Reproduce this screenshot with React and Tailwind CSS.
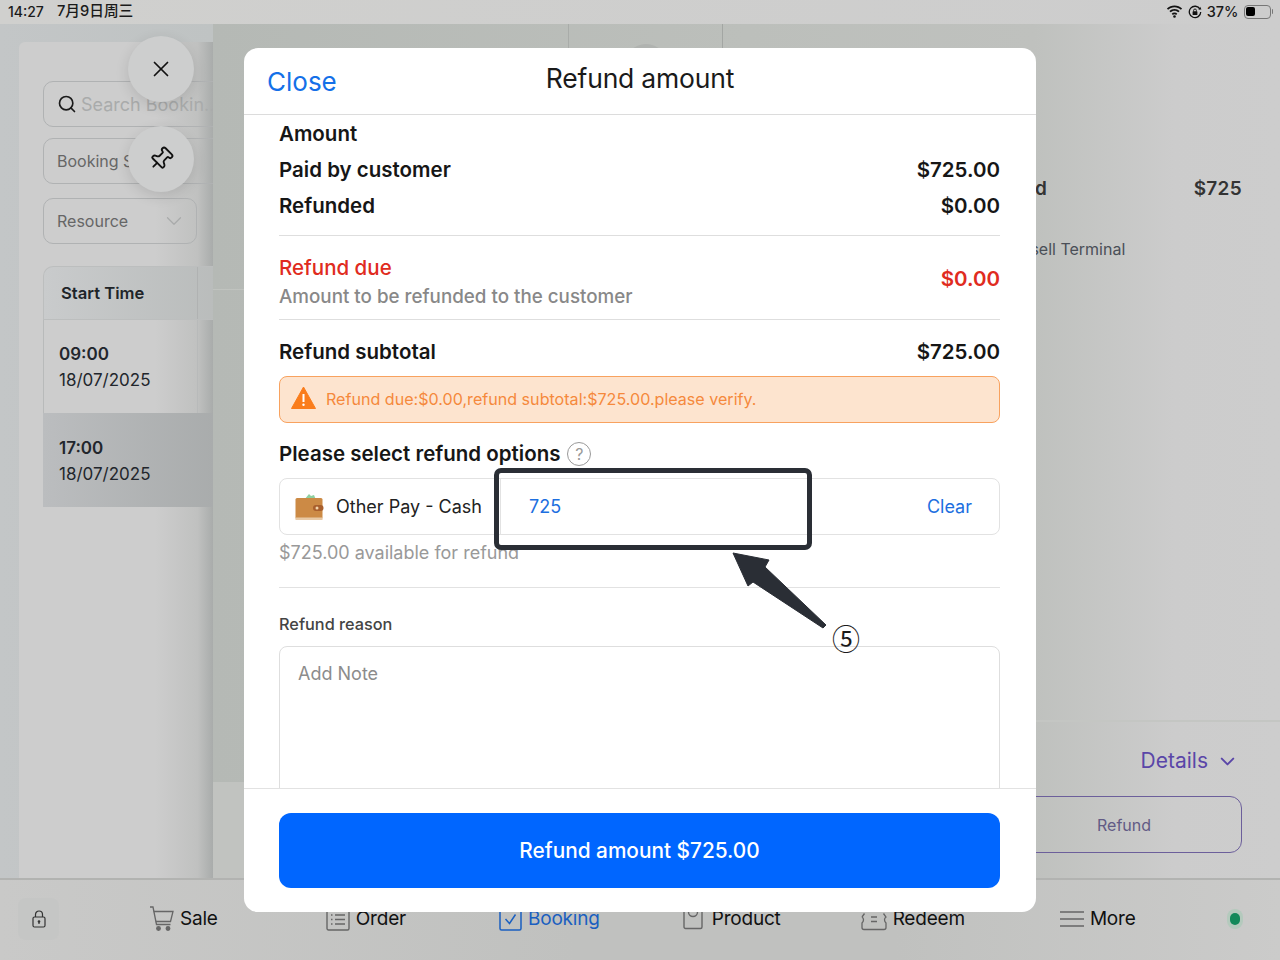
import React from "react";
import { Search, X, Pin, ChevronDown } from "lucide-react";

const Wifi = () => (
  <svg width="17" height="13" viewBox="0 0 17 13" fill="#111">
    <path d="M8.5 2.2c2.5 0 4.7 1 6.4 2.6l1.2-1.3C14.100 1.600 11.400.4 8.500.4S2.900 1.600.9 3.500l1.200 1.300C3.800 3.200 6 2.200 8.500 2.200z" />
    <path d="M8.500 5.800c1.500 0 2.800.6 3.900 1.500l1.200-1.300C12.200 4.800 10.400 4 8.500 4s-3.700.8-5.100 2l1.200 1.300c1.100-.9 2.400-1.500 3.900-1.500z" />
    <path d="M8.500 9.300c.7 0 1.200.3 1.600.7l1.200-1.300c-.7-.7-1.700-1.100-2.800-1.100s-2.100.4-2.800 1.100L6.900 10c.4-.4.900-.7 1.600-.7z" />
    <circle cx="8.500" cy="11.500" r="1.300" />
  </svg>
);

const RotLock = () => (
  <svg width="14" height="14" viewBox="0 0 14 14" fill="none">
    <path d="M12 4.200A5.700 5.700 0 1 0 12.700 7" stroke="#111" strokeWidth="1.300" />
    <path d="M10.400 4.500h3l-1.200-2.700z" fill="#111" />
    <rect x="4.600" y="6.300" width="4.800" height="3.700" rx=".6" fill="#111" />
    <path d="M5.600 6.500V5.400a1.400 1.400 0 0 1 2.800 0v1.100" stroke="#111" strokeWidth=".9" />
  </svg>
);

const Battery = () => (
  <div className="flex items-center">
    <div className="w-[27px] h-[14px] rounded-[4px] border border-[#777] p-[1.5px]">
      <div className="w-[9px] h-full rounded-[2px] bg-black" />
    </div>
    <div className="w-[1.5px] h-[5px] bg-[#777] rounded-r ml-[1px]" />
  </div>
);

const LockIcon = () => (
  <svg width="14" height="18" viewBox="0 0 14 18" fill="none" stroke="#333" strokeWidth="1.200">
    <rect x="1" y="7" width="12" height="10" rx="1.500" />
    <path d="M3.500 7V4.500a3.500 3.500 0 0 1 7 0V7" />
    <circle cx="7" cy="11.500" r="1.300" fill="#333" stroke="none" />
    <path d="M7 12v2" />
  </svg>
);

const CartIcon = () => (
  <svg width="25" height="26" viewBox="0 0 25 26" fill="none" stroke="#666" strokeWidth="1.300">
    <path d="M1 1h3l3.500 17.500h14" />
    <path d="M4.700 5.500H24l-2.500 10H6.700" />
    <circle cx="9.500" cy="22.500" r="1.800" fill="#666" />
    <circle cx="19" cy="22.500" r="1.800" fill="#666" />
  </svg>
);

const OrderIcon = () => (
  <svg width="24" height="24" viewBox="0 0 24 24" fill="none" stroke="#666" strokeWidth="1.400">
    <rect x="1" y="2" width="22" height="21" rx="1.500" />
    <path d="M9 8h10M9 12.500h10M9 17h10" />
    <path d="M5 8h1.500M5 12.500h1.500M5 17h1.500" />
  </svg>
);

const BookingIcon = () => (
  <svg width="23" height="24" viewBox="0 0 23 24" fill="none" stroke="#1a5fc0" strokeWidth="1.500">
    <rect x="1" y="2" width="21" height="21" rx="1.500" />
    <path d="M6.500 12l4 4.500 6-9" />
  </svg>
);

const ProductIcon = () => (
  <svg width="20" height="22" viewBox="0 0 20 22" fill="none" stroke="#666" strokeWidth="1.400">
    <rect x="1" y="1.500" width="18" height="19" rx="1.500" />
    <path d="M5.500 4a4.500 4.500 0 0 0 9 0" />
  </svg>
);

const RedeemIcon = () => (
  <svg width="26" height="24" viewBox="0 0 26 24" fill="none" stroke="#666" strokeWidth="1.300">
    <path d="M3 2h20M1 10c2 1.500 2 4 0 6v4.500A2 2 0 0 0 3 22.500h20a2 2 0 0 0 2-2V16c-2-2-2-4.500 0-6l-2.500-3.500M1 10l2.500-3.500" />
    <path d="M10 10h6M10 14.500h6" />
  </svg>
);

const MoreIcon = () => (
  <svg width="24" height="18" viewBox="0 0 24 18" fill="none" stroke="#666" strokeWidth="1.600">
    <path d="M0 2h24M0 9h24M0 16h24" />
  </svg>
);

const WalletIcon = () => (
  <svg width="29" height="28" viewBox="0 0 29 28" fill="none">
    <path d="M9 7l5-6 2 2 3-1 2 5z" fill="#8fd0a0" />
    <rect x="0.500" y="5" width="27" height="21" rx="1.500" fill="#cc8a45" />
    <rect x="0.500" y="24.500" width="27" height="2.500" fill="#e8c9a5" />
    <rect x="18" y="12" width="10.500" height="6" rx="3" fill="#a85f2d" />
    <circle cx="22" cy="15" r="1.500" fill="#f3d3a9" />
  </svg>
);

const WarnIcon = () => (
  <svg width="25" height="23" viewBox="0 0 25 23" className="-mt-[4px]">
    <path d="M12.500 1L24.500 22.500H.5z" fill="#fa7d1c" stroke="#fa7d1c" strokeLinejoin="round" />
    <rect x="11.500" y="8" width="2" height="8" fill="#fff" />
    <circle cx="12.500" cy="18.800" r="1.200" fill="#fff" />
  </svg>
);

const Row = ({ label, value }) => (
  <div className="h-9 shrink-0 flex items-center justify-between text-[20.5px] font-semibold text-[#161616]">
    <span>{label}</span>
    <span>{value}</span>
  </div>
);

const NavItem = ({ icon, label, className, text }) => (
  <div className={`flex items-center gap-[6px] ${className}`}>
    {icon}
    <span className={`text-[19px] tracking-[-0.2px] ${text}`}>{label}</span>
  </div>
);

export default function App() {
  return (
    <div className="relative w-[1280px] h-[960px] overflow-hidden flex flex-col bg-[#cbcbcb] font-[Inter,'Noto_Sans_CJK_SC',sans-serif]">
      {/* status bar */}
      <div className="h-6 shrink-0 flex items-center justify-between pl-2 pr-[7px] pb-[1px] bg-linear-to-r from-[#d0d0ce] to-[#cdcdcd] text-[14px] font-medium text-[#1a1a1a]">
        <div className="flex gap-[13px] items-center">
          <span>14:27</span>
          <span className="text-[14.7px]">7月9日周三</span>
        </div>
        <div className="flex items-center gap-[5px]">
          <Wifi />
          <RotLock />
          <span className="text-[14.5px]">37%</span>
          <Battery />
        </div>
      </div>

      {/* main */}
      <div className="h-[854px] shrink-0 flex">
        {/* left panel */}
        <div className="w-[213px] shrink-0 pt-[18px] pl-[19px] bg-linear-to-r from-[#c3c6c7] to-[#bfc3c3] overflow-hidden">
          <div className="h-full rounded-tl-[6px] pt-[39px] pl-6 bg-[linear-gradient(90deg,#cdcdcd_0%,#cdcdcd_70%,#c0c1c0_92%,#a9acab_100%)]">
            <div className="w-[200px] h-[46px] border border-[#b0b2b3] rounded-[10px] flex items-center pl-[13px] gap-[4px] text-[#a9abab] text-[18px] whitespace-nowrap">
              <Search size={20} color="#1a1a1a" strokeWidth={2} className="shrink-0" />
              <span>Search Bookin..</span>
            </div>
            <div className="mt-[11px] w-[200px] h-[46px] border border-[#b0b2b3] rounded-[10px] flex items-center pl-[13px] text-[#666] text-[16px] whitespace-nowrap">
              Booking Status
            </div>
            <div className="mt-[14px] w-[154px] h-[46px] border border-[#b0b2b3] rounded-[10px] flex items-center justify-between pl-[13px] pr-[9px] text-[#666] text-[16px]">
              <span>Resource</span>
              <ChevronDown size={26} color="#a8aaaa" strokeWidth={1.100} />
            </div>
            <div className="mt-[22px] w-[200px]">
              <div className="h-[54px] flex items-center pl-[17px] rounded-tl-[10px] border-t border-l border-b border-[#bcbebe] bg-linear-to-r from-[#c9cbcc] to-[#b7bab9] text-[16.6px] font-semibold text-[#202428]">
                <span className="w-[136px]">Start Time</span>
                <span className="h-full border-l border-[#b0b2b2]" />
              </div>
              <div className="h-[93px] flex">
                <div className="w-[155px] h-full pl-[15px] pt-[24px] border-l border-r border-[#b8baba] text-[#22262c]">
                  <div className="text-[17px] font-semibold leading-[21px]">09:00</div>
                  <div className="text-[17px] mt-[5px] leading-[21px]">18/07/2025</div>
                </div>
              </div>
              <div className="h-[94px] pl-[16px] pt-[25px] bg-linear-to-r from-[#bbbdbf] to-[#a6a9a9] text-[#22262c]">
                <div className="text-[17px] font-semibold leading-[21px]">17:00</div>
                <div className="text-[17px] mt-[5px] leading-[21px]">18/07/2025</div>
              </div>
            </div>
          </div>
        </div>

        {/* right page, behind the modal */}
        <div className="flex-1 flex flex-col bg-[linear-gradient(90deg,#b5b9b5_0%,#bcbfbb_50%,#bfc1be_77%,#cccccc_90%,#cdcdcd_100%)]">
          <div className="h-[696px] shrink-0 flex">
            <div className="w-[356px] h-[266px] border-r border-[#a9aca9] border-b border-b-[#c0c3bf]" />
            <div className="w-[154px] h-[24px] border-r border-[#a3a6a3] flex justify-center">
              <div className="w-[44px] h-[44px] mt-[20px] rounded-full bg-[#b0b3b0]" />
            </div>
            <div className="flex-1 pl-[284px] pr-[38px] pt-[151px]">
              <div className="flex justify-between items-center text-[19px] font-semibold text-[#333]">
                <span>Paid</span>
                <span className="tracking-[0.3px]">$725</span>
              </div>
              <div className="mt-[33px] ml-[4px] text-[16px] text-[#4a4f57] whitespace-nowrap">Resell Terminal</div>
            </div>
          </div>
          <div className="flex-1 flex">
            <div className="w-[31px] mt-[62px] bg-[#c1c3c0]" />
            <div className="flex-1 ml-[300px] border-t-2 border-[#c4c6c3] flex flex-col items-end pr-[38px]">
              <div className="mt-[26px] h-[26px] flex items-center gap-[8px] pr-[3px] text-[21px] text-[#5a46a8]">
                <span>Details</span>
                <ChevronDown size={23} color="#5a46a8" strokeWidth={2} />
              </div>
              <div className="mt-[22px] w-[236px] h-[57px] border-[1.500px] border-[#6c5f9b] rounded-[12px] flex items-center justify-center text-[16px] text-[#625b85]">
                Refund
              </div>
            </div>
          </div>
        </div>
      </div>

      {/* bottom nav */}
      <div className="flex-1 flex items-center pl-[18px] pb-[2px] border-t-2 border-[#b2b3b1] bg-[linear-gradient(90deg,#c9c9c8_0%,#c0c1bf_45%,#c0c1bf_70%,#cbcbca_100%)] text-[#111]">
        <div className="w-[41px] h-[42px] rounded-[8px] bg-[#c5c6c5] flex items-center justify-center">
          <LockIcon />
        </div>
        <NavItem className="ml-[90px]" icon={<CartIcon />} label="Sale" />
        <NavItem className="ml-[108px]" icon={<OrderIcon />} label="Order" />
        <NavItem className="ml-[93px]" icon={<BookingIcon />} label="Booking" text="text-[#1a5fc0]" />
        <NavItem className="ml-[83px] !gap-[9px]" icon={<ProductIcon />} label="Product" />
        <NavItem className="ml-[80px]" icon={<RedeemIcon />} label="Redeem" />
        <NavItem className="ml-[95px]" icon={<MoreIcon />} label="More" />
        <div className="ml-[91px] w-4 h-5 rounded-full bg-[#b4cabd] flex items-center justify-center">
          <div className="w-[10px] h-[12px] rounded-full bg-[#13895a]" />
        </div>
      </div>

      {/* floating buttons */}
      <div className="absolute left-[128px] top-[36px] w-[66px] h-[66px] rounded-full bg-[#cdcece] shadow-[0_4px_14px_rgba(0,0,0,0.12)] flex items-center justify-center">
        <X size={26} color="#111" strokeWidth={1.600} />
      </div>
      <div className="absolute left-[128px] top-[126px] w-[66px] h-[66px] rounded-full bg-[#cdcece] shadow-[0_4px_14px_rgba(0,0,0,0.12)] flex items-center justify-center">
        <Pin size={26} color="#111" strokeWidth={1.700} className="rotate-45" />
      </div>

      {/* modal */}
      <div className="absolute left-[244px] top-[48px] w-[792px] h-[864px] rounded-[14px] bg-white flex flex-col overflow-hidden">
        <div className="relative h-[67px] shrink-0 border-b border-[#dcdcdc] flex justify-center">
          <span className="absolute left-[23px] top-[17px] text-[26px] leading-[34px] text-[#1470e8]">Close</span>
          <span className="mt-[13px] text-[26.5px] leading-[34px] tracking-[-0.2px] text-[#1a1a1a]">Refund amount</span>
        </div>

        <div className="flex-1 min-h-0 overflow-hidden pl-[35px] pr-[36px] pt-px flex flex-col">
          <Row label="Amount" />
          <Row label="Paid by customer" value="$725.00" />
          <Row label="Refunded" value="$0.00" />

          <div className="mt-[11px] h-[85px] shrink-0 border-y border-[#dedede] flex items-center justify-between">
            <div className="pt-[10px]">
              <div className="text-[20.5px] font-medium leading-[26px] text-[#e02b20]">Refund due</div>
              <div className="mt-[3px] text-[18.8px] font-medium leading-[26px] text-[#888]">Amount to be refunded to the customer</div>
            </div>
            <div className="pt-[4px] text-[20.5px] font-semibold text-[#e02b20]">$0.00</div>
          </div>

          <div className="mt-[17px] h-[30px] shrink-0 flex items-center justify-between text-[20.5px] font-semibold text-[#161616]">
            <span>Refund subtotal</span>
            <span>$725.00</span>
          </div>

          <div className="mt-[9px] h-[47px] shrink-0 rounded-[8px] border-[1.500px] border-[#f8a25f] bg-[#fde4cf] flex items-center gap-[10px] pl-[11px] text-[16.1px] text-[#f5893c]">
            <WarnIcon />
            <span>Refund due:$0.00,refund subtotal:$725.00.please verify.</span>
          </div>

          <div className="mt-[16px] h-[30px] shrink-0 flex items-center gap-[7px] text-[20.5px] font-semibold text-[#161616]">
            <span>Please select refund options</span>
            <span className="w-6 h-6 rounded-full border-[1.500px] border-[#999] flex items-center justify-center text-[16px] font-normal text-[#999]">?</span>
          </div>

          <div className="mt-[9px] h-[57px] shrink-0 rounded-[8px] border border-[#e2e2e2] flex items-center pl-[15px] pr-[27px] text-[18px]">
            <WalletIcon />
            <span className="ml-[12px] w-[164px] text-[#222] whitespace-nowrap">Other Pay - Cash</span>
            <span className="h-full border-l border-[#e2e2e2]" />
            <span className="ml-[28px] flex-1 text-[#1d6fe0]">725</span>
            <span className="text-[#1d6fe0]">Clear</span>
          </div>

          <div className="mt-[6px] h-[24px] shrink-0 text-[18px] leading-[24px] text-[#999]">$725.00 available for refund</div>

          <div className="mt-[22px] shrink-0 border-t border-[#e2e2e2]" />

          <div className="mt-[25px] h-[22px] shrink-0 text-[16.3px] leading-[22px] font-medium text-[#444]">Refund reason</div>

          <div className="mt-[11px] h-[200px] shrink-0 rounded-[8px] border border-[#dedede] pl-[18px] pt-[14px] text-[18px] leading-[26px] text-[#8c8c8c]">
            Add Note
          </div>
        </div>

        <div className="h-[124px] shrink-0 border-t border-[#e2e2e2] pl-[35px] pr-[36px] pt-[24px]">
          <div className="h-[75px] rounded-[12px] bg-[#0066ff] flex items-center justify-center text-[20.8px] font-medium text-white">
            Refund amount $725.00
          </div>
        </div>
      </div>

      {/* annotation */}
      <div className="absolute left-[494px] top-[468px] w-[318px] h-[82px] rounded-[7px] border-[5px] border-[#2a2e35]" />
      <svg className="absolute left-[725px] top-[545px]" width="110" height="90" viewBox="0 0 110 90">
        <polygon points="8,8 44,15 40,22 101,80 98,83 28,37 23,41" fill="#2a2e35" stroke="#2a2e35" strokeLinejoin="round" />
      </svg>
      <span className="absolute left-[832px] top-[619px] text-[28px] leading-[38px] text-[#1a1a1a] font-['Noto_Sans_CJK_SC',sans-serif]">⑤</span>
    </div>
  );
}
